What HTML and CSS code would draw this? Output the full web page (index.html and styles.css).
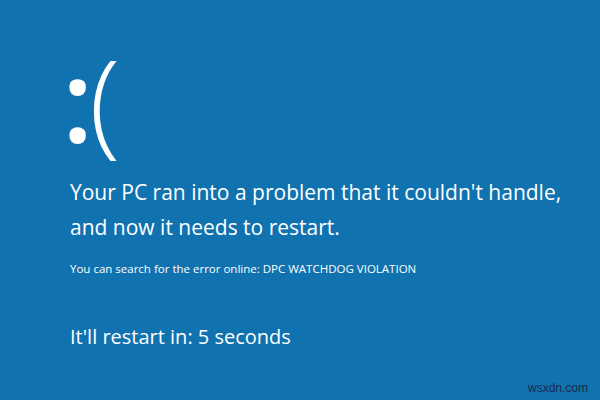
FILE: index.html
```html
<!DOCTYPE html>
<html>
<head>
<meta charset="utf-8">
<link rel="stylesheet" href="styles.css">
</head>
<body>
<main class="screen">
  <div class="face"><span class="eyes">:</span><span class="mouth">(</span></div>
  <p class="message">Your PC ran into a problem that it couldn't handle,<br>and now it needs to restart.</p>
  <p class="detail">You can search for the error online: DPC WATCHDOG VIOLATION</p>
  <p class="countdown">It'll restart in: 5 seconds</p>
  <span class="watermark">wsxdn.com</span>
</main>
</body>
</html>
```
FILE: styles.css
```css
html, body {
  margin: 0;
  padding: 0;
}
body {
  width: 600px;
  height: 400px;
  overflow: hidden;
  background: #1172b0;
}
.screen {
  position: relative;
  width: 600px;
  height: 400px;
  box-sizing: border-box;
  padding: 42px 0 0 70px;
  color: #ffffff;
  font-family: "Open Sans", "Noto Sans", sans-serif;
}
.face {
  font-size: 114px;
  line-height: 114px;
  height: 133px;
  margin-left: -8px;
}
.eyes {
  font-weight: 600;
  letter-spacing: -4px;
}
.mouth {
  font-weight: 300;
}
.message {
  margin: 0;
  font-size: 21px;
  line-height: 35px;
}
.detail {
  margin: 16px 0 0 0;
  font-size: 11.5px;
  line-height: 16px;
}
.countdown {
  margin: 45px 0 0 0;
  font-size: 20px;
  line-height: 30px;
}
.watermark {
  position: absolute;
  right: 12px;
  bottom: 5px;
  font-family: "Liberation Sans", Arial, sans-serif;
  font-size: 12px;
  color: #1a2a4a;
}
```
